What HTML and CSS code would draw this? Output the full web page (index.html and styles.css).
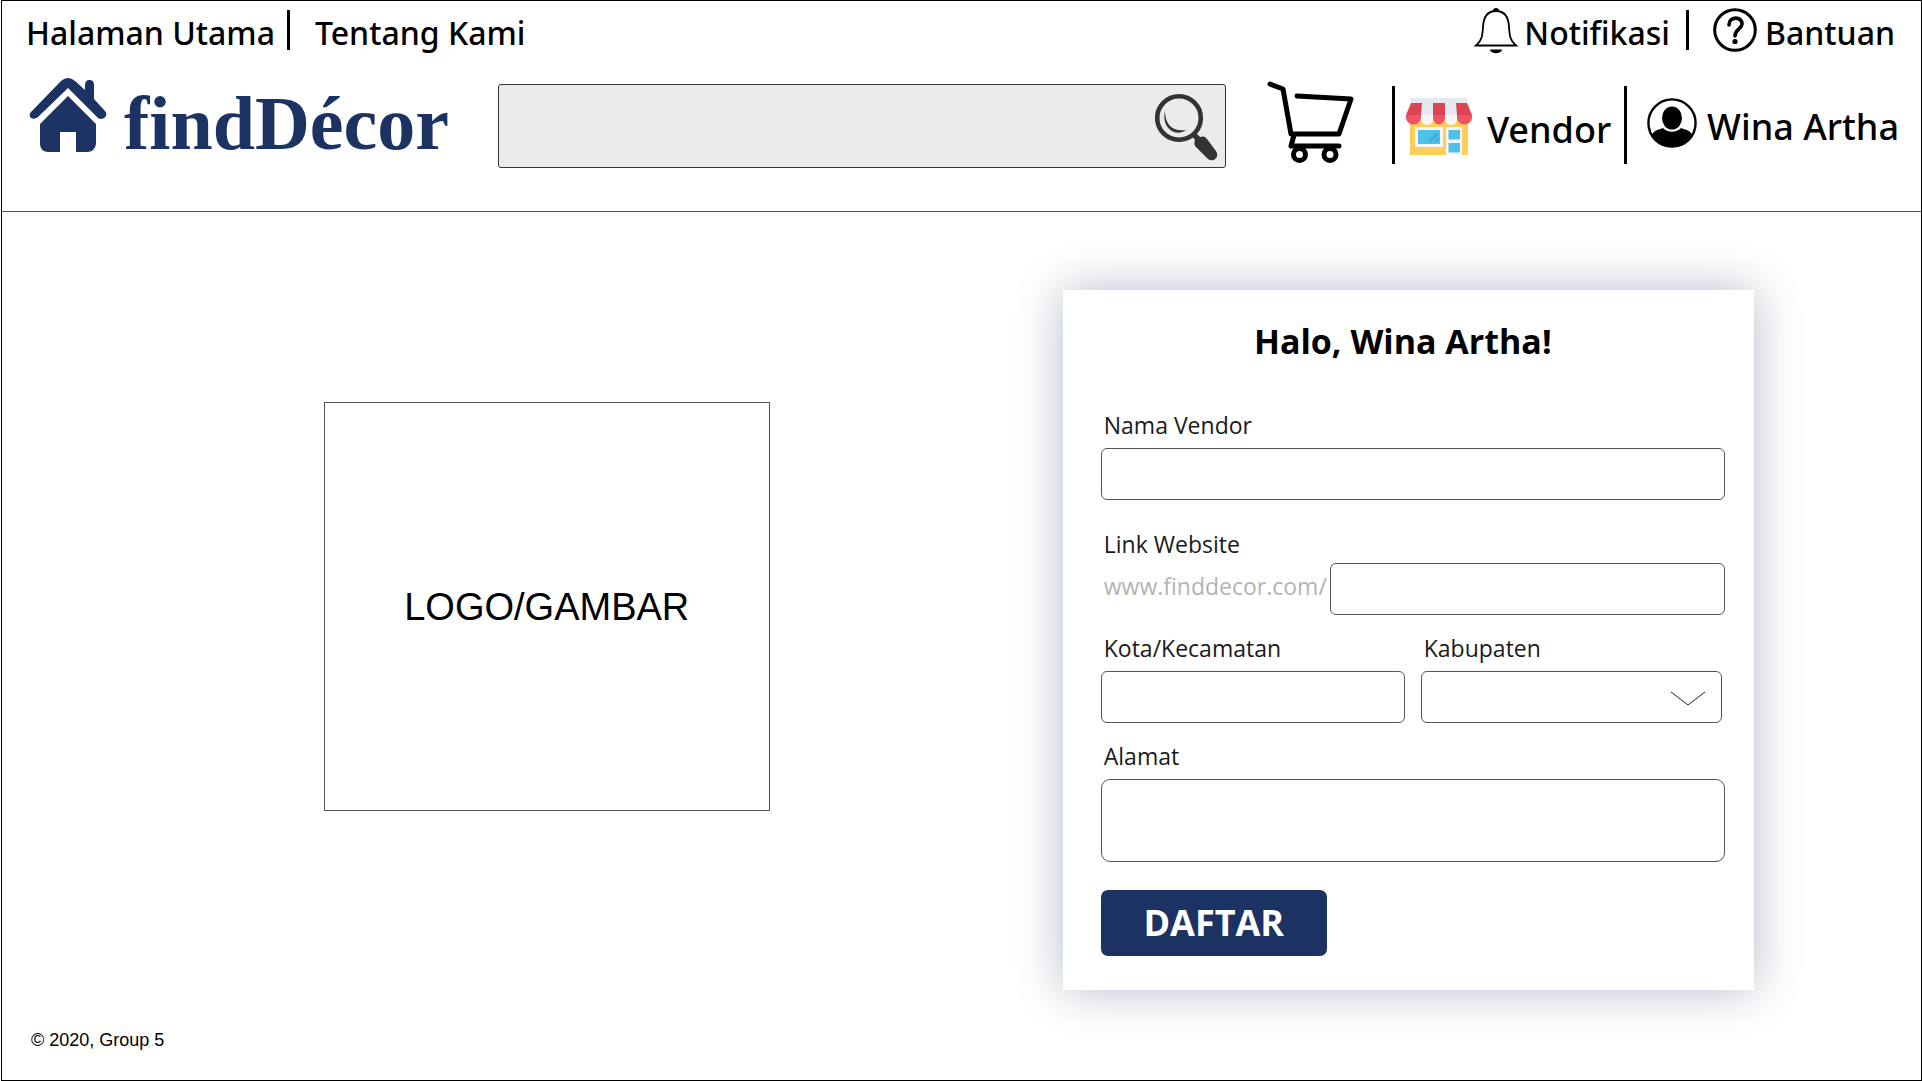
FILE: index.html
```html
<!DOCTYPE html>
<html lang="id">
<head>
<meta charset="utf-8">
<meta name="viewport" content="width=device-width, initial-scale=1">
<title>findDécor</title>
<link rel="stylesheet" href="styles.css">
</head>
<body>
<div class="page">
  <header class="header">
    <nav class="topnav">
      <a href="#">Halaman Utama</a>
      <span class="divider"></span>
      <a href="#" class="about">Tentang Kami</a>
      <a href="#" class="notif">
        <svg width="44" height="48" viewBox="0 0 44 48" aria-hidden="true"><path d="M2 37.500C8 33 8.500 27 9 19 9.500 9 14 3 22 3s12.500 6 13 16c.500 8 1 14 7 18.500z" fill="none" stroke="#000" stroke-width="1.800"/><path d="M19 3a3 3 0 0 1 6 0z"/><path d="M16 41.500h12c-1 5-11 5-12 0z"/></svg>
        Notifikasi
      </a>
      <span class="divider"></span>
      <a href="#" class="help">
        <svg width="44" height="44" viewBox="0 0 44 44" aria-hidden="true"><circle cx="22" cy="22" r="20.300" fill="none" stroke="#000" stroke-width="3"/><path d="M16 17c0-9 13-9 13-1 0 5-7 5-7 12" fill="none" stroke="#000" stroke-width="3.600" stroke-linecap="round"/><circle cx="22" cy="33.500" r="2.600"/></svg>
        Bantuan
      </a>
    </nav>
    <div class="mainbar">
      <a href="#" class="brand">
        <svg width="78" height="76" viewBox="0 0 78 76" aria-hidden="true"><g fill="#1b3263"><path d="M2 35 32 4q7-6 14 0l10 9V8q0-5 4.500-5T65 8v14l11 12c4 5-2 10-7 7L39 11 9 40c-5 4-11 0-7-5z"/><path d="M39 19 67 47v20q-1 7-8 8H47V55H31v20H19q-8-1-8-8V47z"/></g></svg>
        <span class="wordmark">findDécor</span>
      </a>
      <form class="search" role="search">
        <input type="search" aria-label="Cari">
        <button type="submit" aria-label="Cari">
          <svg width="63" height="69" viewBox="0 0 63 69" aria-hidden="true"><circle cx="24" cy="26" r="21.800" fill="none" stroke="#333" stroke-width="4.600"/><path d="M10 19c0 14 8 21 21 19-11 8-25-3-21-19z" fill="#333"/><path d="m37 44 4-3 4 4c3-1 5-1 7 2l9 12c4 6-3 12-8 8L42 56c-3-2-3-5-2-8z" fill="#333"/></svg>
        </button>
      </form>
      <a href="#" class="cart" aria-label="Keranjang">
        <svg width="87" height="84" viewBox="0 0 87 84" fill="none" stroke="#000" stroke-width="5" stroke-linecap="round" stroke-linejoin="round" aria-hidden="true"><path d="m3 4 13 5 8 45h48L84 19 30 16"/><path d="m27 55-3 11h48"/><circle cx="32.500" cy="74.500" r="6"/><circle cx="63" cy="74.500" r="6"/></svg>
      </a>
      <span class="divider"></span>
      <a href="#" class="vendor">
        <svg width="66" height="58" viewBox="0 0 66 58" aria-hidden="true"><path fill="#ffce54" d="M4 22h58v35H4z"/><path fill="#e6e9ed" d="M4.500 0h57v17h-57z"/><path fill="#da4453" d="M5 5h11l-1 12H0zM27 5h12v12H27zM50 5h11l5 12H51z"/><path fill="#ed5564" d="M0 17h15v3a7.500 6.500 0 0 1-15 0zM27 17h12v3a6 6.500 0 0 1-12 0zM51 17h15v3a7.500 6.500 0 0 1-15 0z"/><path fill="#f5f7fa" d="M15 17h12v4a6 6 0 0 1-12 0zM39 17h12v4a6 6 0 0 1-12 0zM9 29h28v20H9zM40 29h16v28H40z"/><path fill="#4fc1e9" d="M12 32h22v14H12zM42.500 32H54v9.500H42.500zM42.500 45H54v9.500H42.500z"/><path d="m23 44 9-9M29 44l4-4" stroke="#3bafda" stroke-width="2.500"/></svg>
        <span>Vendor</span>
      </a>
      <span class="divider"></span>
      <a href="#" class="user">
        <svg width="50" height="50" viewBox="0 0 50 50" aria-hidden="true"><circle cx="25" cy="25" r="23.600" fill="none" stroke="#000" stroke-width="2.400"/><ellipse cx="25" cy="20" rx="10" ry="11.500"/><path d="M4 38c3-6 7-6 12-8 5 5 13 5 18 0 5 2 9 2 12 8-9 15-33 15-42 0z"/></svg>
        <span>Wina Artha</span>
      </a>
    </div>
  </header>

  <main class="main">
    <div class="picture">LOGO/GAMBAR</div>
    <form class="card">
      <h1>Halo, Wina Artha!</h1>
      <div class="field">
        <label for="nama">Nama Vendor</label>
        <input id="nama" type="text">
      </div>
      <div class="field field-link">
        <label for="link">Link Website</label>
        <div class="link-row">
          <span class="prefix">www.finddecor.com/</span>
          <input id="link" type="text">
        </div>
      </div>
      <div class="pair">
        <div class="field">
          <label for="kota">Kota/Kecamatan</label>
          <input id="kota" type="text">
        </div>
        <div class="field">
          <label for="kabupaten">Kabupaten</label>
          <div class="select-box">
            <select id="kabupaten"><option value=""></option></select>
            <svg class="chevron" width="36" height="16" viewBox="0 0 36 16" aria-hidden="true"><path d="m1 1 17 13L35 1" fill="none" stroke="#222"/></svg>
          </div>
        </div>
      </div>
      <div class="field">
        <label for="alamat">Alamat</label>
        <textarea id="alamat"></textarea>
      </div>
      <button type="submit" class="submit">DAFTAR</button>
    </form>
  </main>

  <footer class="footer">© 2020, Group 5</footer>
</div>
</body>
</html>
```

FILE: styles.css
```css
* {
  box-sizing: border-box;
}

body {
  margin: 0;
  padding-left: 1px;
  background: #fff;
  color: #000;
  font-family: "Open Sans", "Noto Sans", sans-serif;
}

.page {
  display: flex;
  flex-direction: column;
  min-height: 100vh;
  border: 1px solid #000;
}

a {
  color: inherit;
  text-decoration: none;
}

svg {
  display: block;
  flex: none;
}

input,
select,
textarea,
button {
  font: inherit;
}

/* Header */

.header {
  border-bottom: 1px solid #555;
  padding: 7px 20px 43px 24px;
  font-family: "Noto Sans", "Open Sans", sans-serif;
  font-weight: 500;
}

.topnav {
  display: flex;
  align-items: flex-start;
  height: 52px;
  padding-right: 6px;
  font-size: 32px;
  line-height: 50px;
}

.topnav a {
  display: flex;
}

.divider {
  flex: none;
  width: 3px;
  background: #000;
}

.topnav .divider {
  height: 40px;
  margin-top: 2px;
}

.topnav .divider:first-of-type {
  margin-left: 12px;
}

.about {
  margin-left: 25px;
}

.notif {
  gap: 6px;
  margin: 0 16px 0 auto;
}

.help {
  gap: 8px;
  margin-left: 24px;
}

.mainbar {
  display: flex;
  align-items: flex-start;
  padding-top: 17px;
  font-size: 36px;
  line-height: 50px;
}

.mainbar a {
  display: flex;
}

.brand {
  width: 472px;
  padding-left: 3px;
  gap: 17px;
}

.wordmark {
  padding-top: 3px;
  color: #1b3263;
  font: bold 76px/86px "Liberation Serif", serif;
}

.search {
  display: flex;
  flex: 1;
  height: 84px;
  margin-top: 7px;
  border: 1px solid #333;
  border-radius: 3px;
  background: #ebebeb;
}

.search input {
  flex: 1;
  min-width: 0;
  padding: 0 16px;
  border: 0;
  background: none;
}

.search button {
  padding: 7px;
  border: 0;
  background: none;
}

.cart {
  margin: 3px 38px 0 41px;
}

.mainbar .divider {
  height: 78px;
  margin-top: 9px;
}

.vendor {
  gap: 15px;
  margin: 21px 13px 0 11px;
}

.vendor span {
  padding-top: 7px;
}

.user {
  gap: 10px;
  margin: 21px 2px 0 20px;
}

.user span {
  padding-top: 4px;
}

/* Content */

.main {
  display: grid;
  grid-template-columns: 1fr 1fr;
  justify-items: center;
  padding: 78px 82px 0 114px;
}

.picture {
  display: flex;
  align-items: center;
  justify-content: center;
  width: 100%;
  max-width: 446px;
  height: 409px;
  margin-top: 112px;
  border: 1px solid #555;
  font: 38px/44px "Liberation Sans", Arial, sans-serif;
}

.card {
  width: 100%;
  max-width: 691px;
  padding: 25px 29px 34px 38px;
  background: #fff;
  box-shadow: 0 0 44px #1b326354;
  font-size: 23px;
  font-weight: 500;
  line-height: 32px;
}

h1 {
  margin: 0 20px 42px 0;
  font-size: 34px;
  line-height: 52px;
  text-align: center;
}

.field {
  display: flex;
  flex-direction: column;
  gap: 7px;
  margin-bottom: 28px;
}

.field label,
.prefix {
  padding-left: 3px;
}

.card label {
  color: #1a1a1a;
}

.card input,
.card select,
.card textarea {
  width: 100%;
  min-width: 0;
  height: 52px;
  padding: 0 12px;
  border: 1px solid #555;
  border-radius: 6px;
  background: #fff;
}

.field-link {
  gap: 3px;
  margin-bottom: 17px;
}

.link-row {
  display: flex;
  gap: 3px;
}

.prefix {
  padding-top: 7px;
  color: #b3b3b3;
}

.link-row input {
  flex: 1;
}

.pair {
  display: grid;
  grid-template-columns: 304px 1fr;
  gap: 16px;
  padding-right: 3px;
}

.pair .field {
  margin-bottom: 17px;
}

.select-box {
  position: relative;
}

.card select {
  display: block;
  appearance: none;
}

.chevron {
  position: absolute;
  top: 20px;
  right: 16px;
  pointer-events: none;
}

.card textarea {
  height: 83px;
  border-radius: 9px;
  resize: none;
}

.submit {
  display: block;
  width: 226px;
  height: 66px;
  padding: 0;
  border: 0;
  border-radius: 7px;
  background: #1b3263;
  color: #fff;
  font-size: 36px;
  font-weight: 700;
}

.footer {
  margin-top: auto;
  padding: 0 29px 28px;
  font: 18px/24px "Liberation Sans", Arial, sans-serif;
}
```
